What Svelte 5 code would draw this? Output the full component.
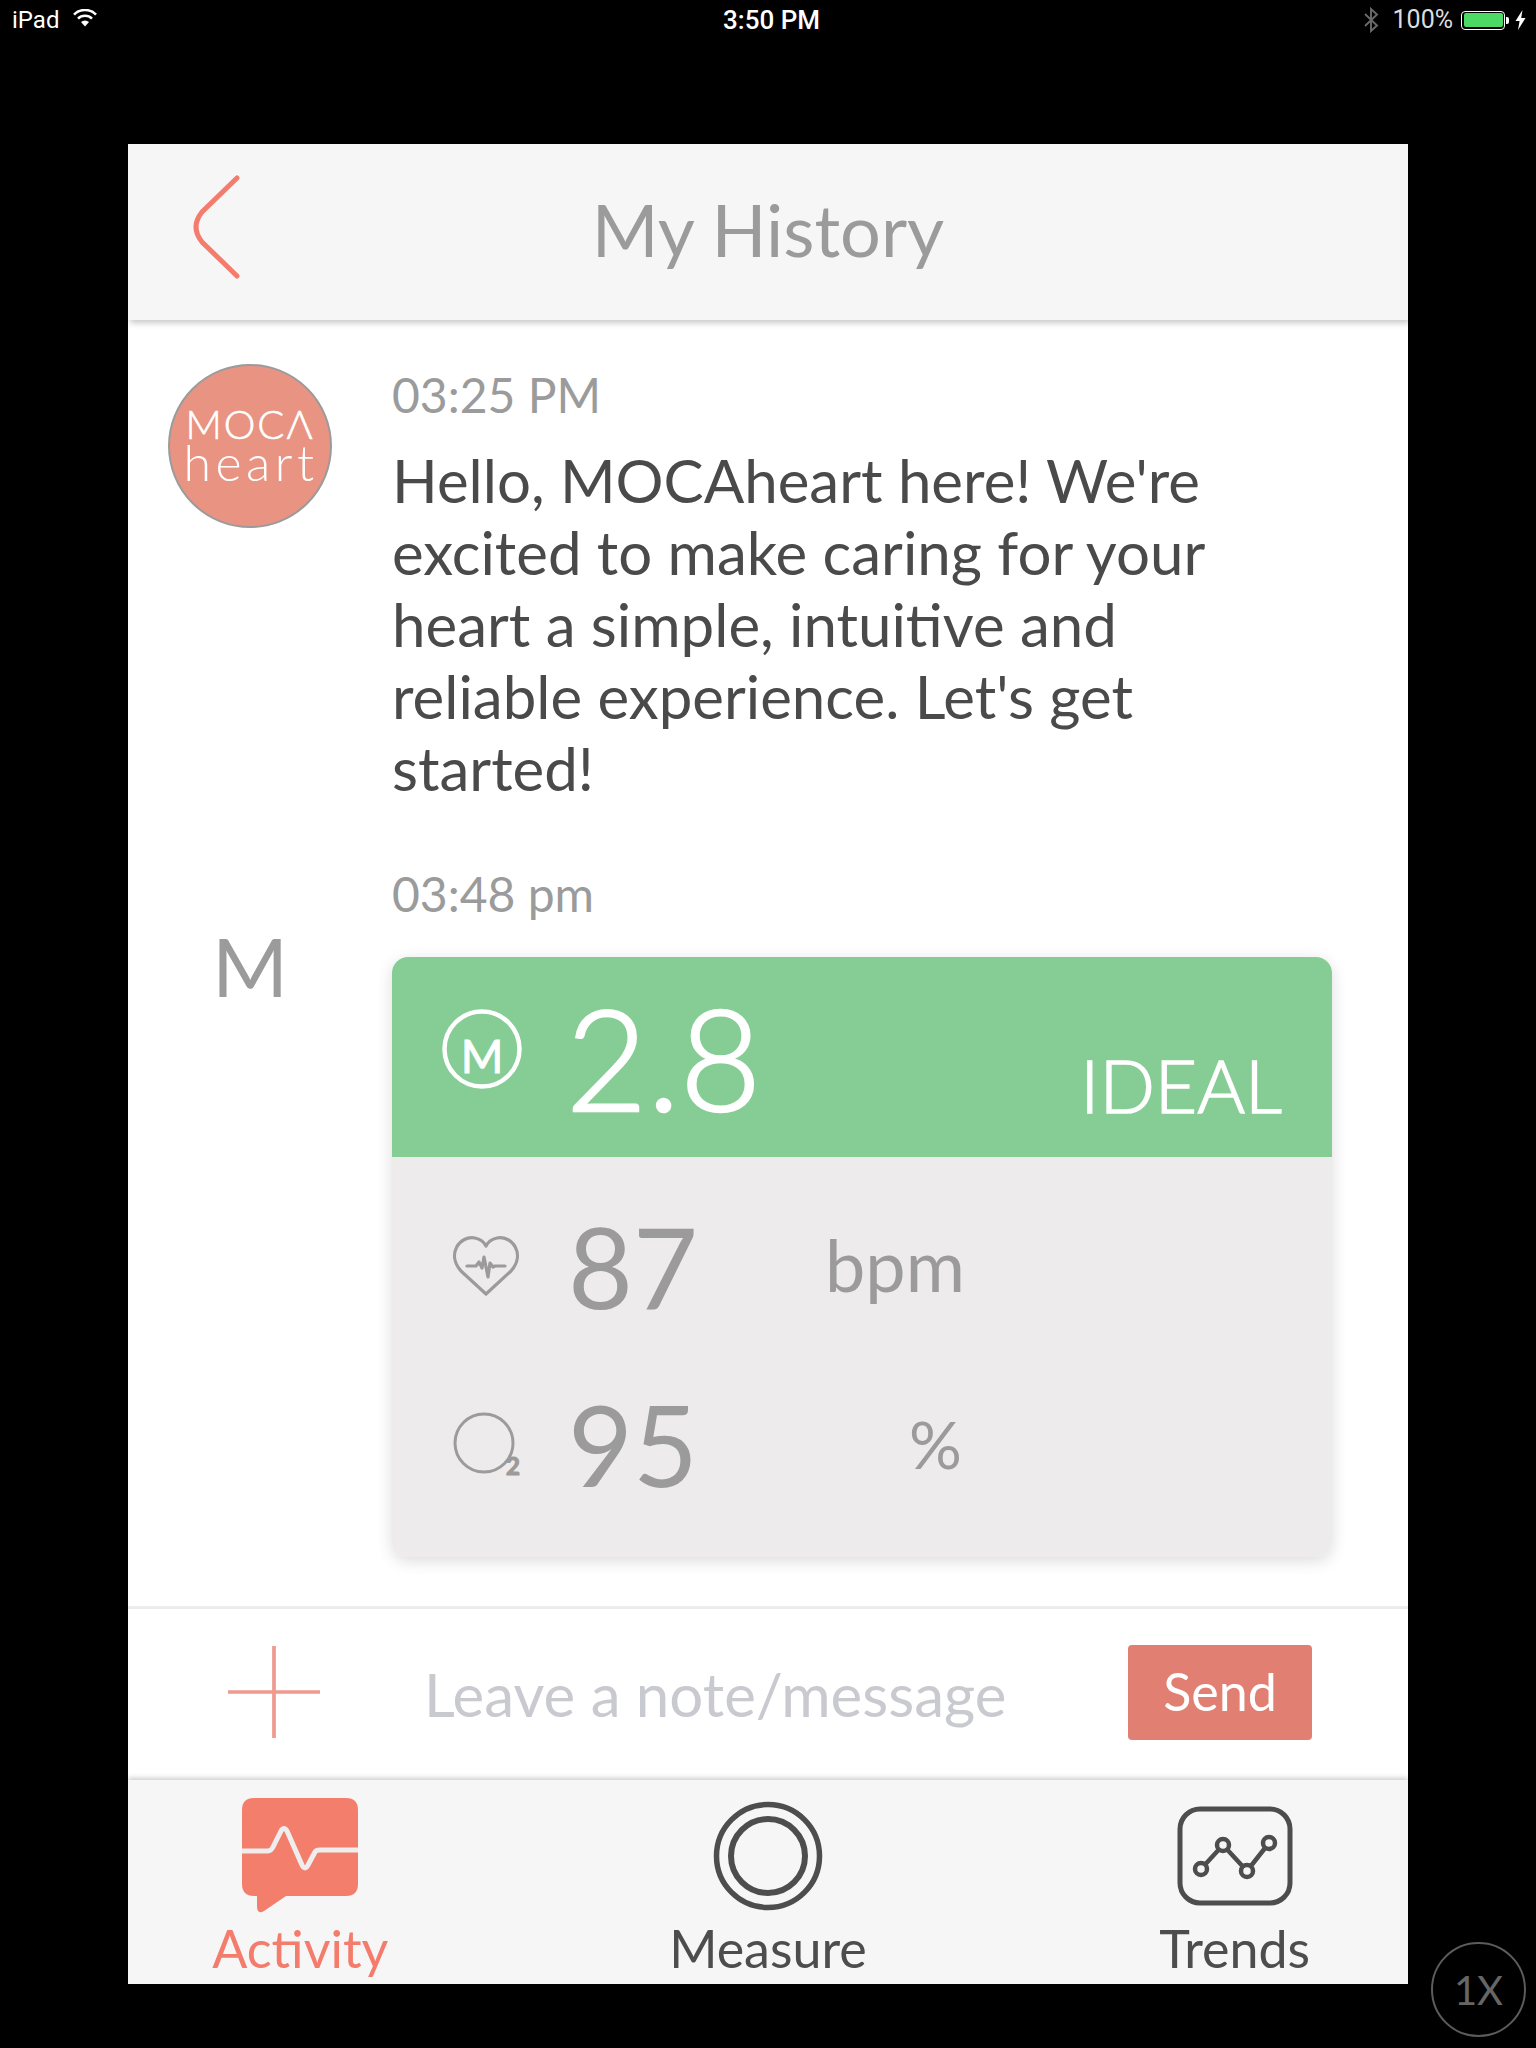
<script lang="ts">
  const tabs = [
    { label: 'Activity', active: true },
    { label: 'Measure', active: false },
    { label: 'Trends', active: false },
  ];

  const message =
    "Hello, MOCAheart here! We're excited to make caring for your heart a simple, intuitive and reliable experience. Let's get started!";
</script>

<div class="page">
  <header class="status">
    <div class="status-left">
      <span>iPad</span>
      <svg class="wifi" viewBox="0 0 26 18" width="26" height="18" aria-hidden="true">
        <path d="M13 17.5 L9 13 A6 6 0 0 1 17 13 Z" fill="#fff" />
        <path d="M6 9.6 A10 10 0 0 1 20 9.6" fill="none" stroke="#fff" stroke-width="2.6" />
        <path d="M2 5.6 A15.5 15.5 0 0 1 24 5.6" fill="none" stroke="#fff" stroke-width="2.6" />
      </svg>
    </div>
    <div class="status-time">3:50 PM</div>
    <div class="status-right">
      <svg viewBox="0 0 16 26" width="16" height="26" aria-hidden="true">
        <path d="M2 7 L14 18.5 L8 24 V2 L14 7.5 L2 19" fill="none" stroke="#6a6a6a" stroke-width="1.9" />
      </svg>
      <span class="pct">100%</span>
      <div class="battery"><div class="battery-fill"></div></div>
      <div class="battery-nub"></div>
      <svg class="bolt" viewBox="0 0 11 20" width="11" height="20" aria-hidden="true">
        <path d="M7.5 0 L0.5 11 H4.6 L3 20 L10.5 8 H6.2 Z" fill="#fff" />
      </svg>
    </div>
  </header>

  <main class="app">
    <div class="topbar">
      <svg class="back" viewBox="0 0 48 104" width="48" height="104" aria-hidden="true">
        <path d="M45 3 L10 37 Q-2 52 10 67 L45 101" fill="none" stroke="#f47c6c" stroke-width="5" stroke-linecap="round" />
      </svg>
      <h1>My History</h1>
    </div>

    <div class="feed">
      <section class="entry first">
        <div class="side">
          <div class="avatar">
            <span class="moca">MOC&Lambda;</span>
            <span class="heart">heart</span>
          </div>
        </div>
        <div class="body">
          <p class="time">03:25 PM</p>
          <p class="message">{message}</p>
        </div>
      </section>

      <section class="entry second">
        <div class="side"><span class="initial">M</span></div>
        <div class="body">
          <p class="time">03:48 pm</p>
          <div class="card">
            <div class="card-top">
              <svg class="m-badge" viewBox="0 0 80 80" width="80" height="80" aria-hidden="true">
                <circle cx="40" cy="40" r="37.5" fill="none" stroke="#fff" stroke-width="4.5" />
              </svg>
              <span class="m-letter">M</span>
              <span class="score">2.8</span>
              <span class="ideal">IDEAL</span>
            </div>
            <div class="card-bottom">
              <div class="stat">
                <svg class="stat-icon" viewBox="0 0 68 64" width="68" height="64" aria-hidden="true">
                  <path d="M34 60 L9 37 C-6 20 8 1 23 4 C28 5 32 8 34 12 C36 8 40 5 45 4 C60 1 74 20 59 37 Z" fill="none" stroke="#9b9b9b" stroke-width="3.2" stroke-linejoin="round" />
                  <path d="M15 32 H24 L27 28 L30 34 L32 23 L36 43 L38 29 L41 33 L43 32 H53" fill="none" stroke="#9b9b9b" stroke-width="3.2" stroke-linecap="round" stroke-linejoin="round" />
                </svg>
                <span class="num">87</span>
                <span class="unit bpm">bpm</span>
              </div>
              <div class="stat">
                <svg class="stat-icon" viewBox="0 0 68 64" width="68" height="64" aria-hidden="true">
                  <circle cx="32" cy="31" r="29" fill="none" stroke="#9b9b9b" stroke-width="3" />
                  <text x="61" y="63" class="sub">2</text>
                </svg>
                <span class="num">95</span>
                <span class="unit pct-unit">%</span>
              </div>
            </div>
          </div>
        </div>
      </section>
    </div>

    <div class="composer">
      <svg class="plus" viewBox="0 0 94 94" width="92" height="92" aria-hidden="true">
        <path d="M47 1 V93 M1 47 H93" stroke="#ee9a8e" stroke-width="3.8" fill="none" stroke-linecap="round" />
      </svg>
      <span class="placeholder">Leave a note/message</span>
      <button class="send">Send</button>
    </div>

    <nav class="tabs">
      {#each tabs as tab}
        <div class="tab" class:active={tab.active}>
          <div class="tab-icon">
            {#if tab.label === 'Activity'}
              <svg viewBox="0 0 116 116" width="116" height="116" aria-hidden="true">
                <path d="M12 0 H104 Q116 0 116 12 V86 Q116 98 104 98 H44 L22 113 Q15 117 15 108 V98 H12 Q0 98 0 86 V12 Q0 0 12 0 Z" fill="#f37e6c" />
                <path d="M0 53 H26 Q29 53 31 49 L39 33 Q42 28 45 33 L60 67 Q63 73 66 67 L73 54 Q74 52 78 52 H116" fill="none" stroke="#eeeeee" stroke-width="5" stroke-linejoin="round" />
              </svg>
            {:else if tab.label === 'Measure'}
              <svg viewBox="0 0 110 110" width="110" height="110" aria-hidden="true">
                <circle cx="55" cy="55" r="51.5" fill="none" stroke="#4d4d4d" stroke-width="5.5" />
                <circle cx="55" cy="55" r="37" fill="none" stroke="#4d4d4d" stroke-width="6" />
              </svg>
            {:else}
              <svg viewBox="0 0 116 100" width="116" height="100" aria-hidden="true">
                <rect x="3" y="3" width="110" height="94" rx="20" fill="none" stroke="#4d4d4d" stroke-width="5" />
                <path d="M24 63 L46 39 L70 65 L92 37" fill="none" stroke="#4d4d4d" stroke-width="4.5" />
                <circle cx="24" cy="63" r="6" fill="#f5f5f5" stroke="#4d4d4d" stroke-width="4.5" />
                <circle cx="46" cy="39" r="6" fill="#f5f5f5" stroke="#4d4d4d" stroke-width="4.5" />
                <circle cx="70" cy="65" r="6" fill="#f5f5f5" stroke="#4d4d4d" stroke-width="4.5" />
                <circle cx="92" cy="37" r="6" fill="#f5f5f5" stroke="#4d4d4d" stroke-width="4.5" />
              </svg>
            {/if}
          </div>
          <span class="tab-label">{tab.label}</span>
        </div>
      {/each}
    </nav>
  </main>

  <div class="speed">1X</div>
</div>

<style>
  :global(body) {
    background: #000;
  }

  .page {
    position: relative;
    width: 1536px;
    height: 2048px;
    overflow: hidden;
    background: #000;
    font-family: Lato, 'Open Sans', sans-serif;
  }

  .status {
    height: 144px;
    display: grid;
    grid-template-columns: 1fr auto 1fr;
    align-items: start;
    padding: 6px 10px 0 12px;
    box-sizing: border-box;
    color: #fff;
    font-family: Roboto, 'Liberation Sans', sans-serif;
    font-size: 24px;
    line-height: 28px;
  }

  .status-left {
    display: flex;
    align-items: center;
    gap: 13px;
  }

  .wifi {
    margin-top: -4px;
  }

  .status-time {
    font-size: 26px;
    font-weight: 500;
    margin-left: 5px;
  }

  .status-right {
    display: flex;
    align-items: center;
    justify-content: flex-end;
  }

  .pct {
    margin-left: 14px;
    font-size: 25px;
    color: #ddd;
  }

  .battery {
    margin-left: 8px;
    width: 44px;
    height: 19px;
    box-sizing: border-box;
    border: 1.5px solid #fff;
    border-radius: 4px;
    padding: 1.5px;
  }

  .battery-fill {
    height: 100%;
    background: #4cd964;
    border-radius: 2px;
  }

  .battery-nub {
    width: 3px;
    height: 7px;
    margin-left: 1px;
    background: #fff;
    border-radius: 0 2px 2px 0;
  }

  .bolt {
    margin-left: 6px;
  }

  .app {
    width: 1280px;
    height: 1840px;
    margin-left: 128px;
    display: flex;
    flex-direction: column;
    background: #fff;
  }

  .topbar {
    position: relative;
    flex: none;
    height: 176px;
    display: flex;
    align-items: center;
    justify-content: center;
    background: #f6f6f6;
    box-shadow: 2px 3px 6px rgba(0, 0, 0, 0.22);
  }

  .back {
    position: absolute;
    left: 64px;
    top: 31px;
  }

  h1 {
    margin: 0;
    font-size: 72px;
    font-weight: 400;
    color: #9b9b9b;
    line-height: 1;
    position: relative;
    top: -3px;
  }

  .feed {
    flex: 1;
    min-height: 0;
    display: flex;
    flex-direction: column;
  }

  .entry {
    display: grid;
    grid-template-columns: 264px 1fr;
  }

  .first {
    padding-top: 47px;
  }

  .second {
    padding-top: 62px;
  }

  .side {
    display: flex;
    justify-content: center;
  }

  .avatar {
    width: 164px;
    height: 164px;
    box-sizing: border-box;
    margin-left: -20px;
    margin-top: -3px;
    padding-bottom: 2px;
    border: 2px solid #9b9b9b;
    border-radius: 50%;
    background: #e99383;
    color: #fff;
    display: flex;
    flex-direction: column;
    align-items: center;
    justify-content: center;
  }

  .moca {
    font-size: 40px;
    line-height: 34px;
    letter-spacing: 2px;
    font-weight: 300;
    -webkit-text-stroke: 0.6px #fff;
  }

  .heart {
    font-size: 50px;
    line-height: 42px;
    font-weight: 300;
    letter-spacing: 4.5px;
    margin-left: 2px;
  }

  .initial {
    font-size: 82px;
    color: #9b9b9b;
    line-height: 1;
    margin-top: 58px;
    margin-left: -20px;
  }

  .body {
    padding-right: 76px;
  }

  .time {
    margin: 0;
    font-size: 48px;
    line-height: 56px;
    color: #9b9b9b;
  }

  .message {
    margin: 21px 0 0;
    max-width: 880px;
    font-size: 60px;
    line-height: 72px;
    color: #4a4a4a;
  }

  .card {
    margin-top: 35px;
    border-radius: 16px;
    overflow: hidden;
    box-shadow: 0 4px 16px rgba(0, 0, 0, 0.14);
  }

  .card-top {
    position: relative;
    height: 200px;
    display: flex;
    align-items: center;
    padding: 0 50px;
    background: #85cd94;
    color: #fff;
  }

  .m-badge {
    flex: none;
    margin-top: -16px;
  }

  .m-letter {
    position: absolute;
    left: 50px;
    width: 80px;
    text-align: center;
    top: 76px;
    font-size: 46px;
    line-height: 1;
    -webkit-text-stroke: 1px #fff;
  }

  .score {
    margin-left: 44px;
    font-size: 140px;
    font-weight: 300;
    line-height: 1;
    -webkit-text-stroke: 2.5px #fff;
  }

  .ideal {
    margin-left: auto;
    font-size: 73px;
    font-weight: 300;
    line-height: 1;
    margin-top: 56px;
    -webkit-text-stroke: 1.5px #fff;
  }

  .card-bottom {
    height: 400px;
    background: #edebec;
    box-sizing: border-box;
    padding-top: 20px;
    color: #9b9b9b;
  }

  .stat {
    height: 178px;
    display: flex;
    align-items: center;
    padding-left: 60px;
  }

  .stat-icon {
    flex: none;
    overflow: visible;
  }

  .sub {
    font-size: 24px;
    font-weight: 700;
    fill: #9b9b9b;
    stroke: #9b9b9b;
    stroke-width: 1.2px;
    text-anchor: middle;
  }

  .num {
    margin-left: 48px;
    font-size: 112px;
    line-height: 1;
    width: 152px;
  }

  .unit {
    font-size: 72px;
    line-height: 1;
  }

  .bpm {
    margin-left: 105px;
    margin-top: -4px;
  }

  .pct-unit {
    margin-left: 189px;
    font-size: 66px;
  }

  .composer {
    flex: none;
    height: 174px;
    display: flex;
    align-items: center;
    padding: 0 96px 0 100px;
    border-top: 3px solid #ececec;
    box-sizing: border-box;
  }

  .plus {
    flex: none;
    margin-top: -6px;
  }

  .placeholder {
    margin-left: 104px;
    font-size: 60px;
    color: #c9c9d0;
    line-height: 1;
    margin-top: -2px;
  }

  .send {
    margin-left: auto;
    width: 184px;
    height: 95px;
    border: none;
    border-radius: 4px;
    background: #e07f72;
    color: #fff;
    font-family: inherit;
    font-size: 52px;
    line-height: 1;
    padding: 0 0 4px;
    margin-top: -4px;
  }

  .tabs {
    flex: none;
    height: 204px;
    display: grid;
    grid-template-columns: repeat(3, 1fr);
    background: #f6f6f6;
    box-shadow: 0 -2px 5px rgba(0, 0, 0, 0.2);
    padding: 18px 0 0;
    box-sizing: border-box;
  }

  .tab {
    display: flex;
    flex-direction: column;
    align-items: center;
    color: #4d4d4d;
  }

  .tab:first-child {
    transform: translateX(-41px);
  }

  .tab:last-child {
    transform: translateX(40px);
  }

  .tab.active {
    color: #f47c6c;
  }

  .tab-icon {
    height: 116px;
    display: flex;
    align-items: center;
  }

  .tab-label {
    font-size: 52px;
    line-height: 60px;
    margin-top: 4px;
  }

  .speed {
    position: absolute;
    left: 1431px;
    top: 1942px;
    width: 95px;
    height: 95px;
    box-sizing: border-box;
    border: 2.5px solid #5c5c5c;
    border-radius: 50%;
    display: flex;
    align-items: center;
    justify-content: center;
    color: #666;
    font-size: 40px;
  }
</style>
